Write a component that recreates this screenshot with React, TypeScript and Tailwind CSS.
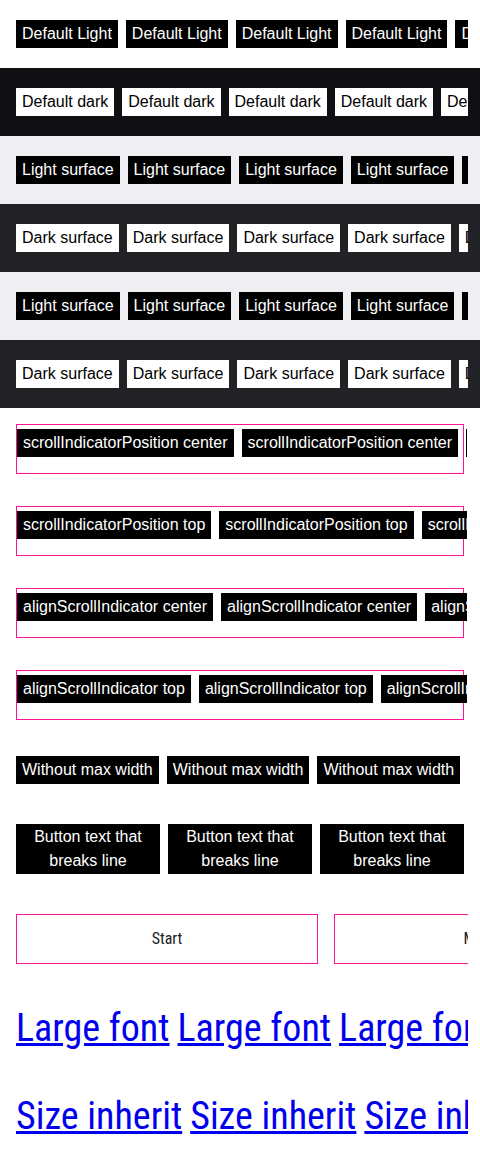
type Tone = "light" | "dark"

// scroll viewport reaching 4px past the content box, like the reference
function Scroller({ children }: { children: React.ReactNode }) {
  return <div className="-mx-1 px-1 overflow-hidden flex gap-2">{children}</div>
}

function Chip({ label, tone }: { label: string; tone: Tone }) {
  return (
    <span
      className={`shrink-0 h-7 px-1.5 flex items-center whitespace-nowrap text-[16px] font-['Liberation_Sans',Arial,sans-serif] ${
        tone === "light" ? "bg-black text-white" : "bg-white text-black"
      }`}
    >
      {label}
    </span>
  )
}

function Row({ label, tone, bg }: { label: string; tone: Tone; bg: string }) {
  return (
    <section className={`px-4 py-5 ${bg}`}>
      <Scroller>
        {[0, 1, 2, 3, 4, 5].map((i) => (
          <Chip key={i} label={label} tone={tone} />
        ))}
      </Scroller>
    </section>
  )
}

function Boxed({ label }: { label: string }) {
  return (
    <section className="px-4 py-4">
      <div className="border border-[#ff1493] pt-1 pb-4">
        <Scroller>
          {[0, 1, 2, 3].map((i) => (
            <Chip key={i} label={label} tone="light" />
          ))}
        </Scroller>
      </div>
    </section>
  )
}

export default function App() {
  const roboto = "font-['Roboto',sans-serif] [font-stretch:condensed]"
  return (
    <div className="bg-white min-h-[1160px]">
      <Row label="Default Light" tone="light" bg="bg-white" />
      <Row label="Default dark" tone="dark" bg="bg-[#101014]" />
      <Row label="Light surface" tone="light" bg="bg-[#eeeff3]" />
      <Row label="Dark surface" tone="dark" bg="bg-[#212226]" />
      <Row label="Light surface" tone="light" bg="bg-[#eeeff3]" />
      <Row label="Dark surface" tone="dark" bg="bg-[#212226]" />

      <Boxed label="scrollIndicatorPosition center" />
      <Boxed label="scrollIndicatorPosition top" />
      <Boxed label="alignScrollIndicator center" />
      <Boxed label="alignScrollIndicator top" />

      {/* Without max width */}
      <section className="px-4 py-5">
        <Scroller>
          {[0, 1, 2, 3].map((i) => (
            <Chip key={i} label="Without max width" tone="light" />
          ))}
        </Scroller>
      </section>

      {/* Wrapping buttons */}
      <section className="px-4 py-5">
        <Scroller>
          {[0, 1, 2, 3].map((i) => (
            <span
              key={i}
              className="shrink-0 w-36 px-1.5 py-px text-center leading-6 text-[16px] bg-black text-white font-['Liberation_Sans',Arial,sans-serif]"
            >
              Button text that breaks line
            </span>
          ))}
        </Scroller>
      </section>

      {/* Start / Middle / End */}
      <section className="px-4 py-5">
        <Scroller>
          <div className="flex gap-4">
            {["Start", "Middle", "End"].map((t) => (
              <div
                key={t}
                className={`shrink-0 w-[302px] h-[50px] border border-[#ff1493] flex items-center justify-center text-[16px] text-[#222] ${roboto}`}
              >
                {t}
              </div>
            ))}
          </div>
        </Scroller>
      </section>

      <section className="px-4 py-5">
        <Scroller>
          {[0, 1, 2, 3].map((i) => (
            <a key={i} href="#" className={`shrink-0 whitespace-nowrap text-[38px] leading-12 text-[#0000ee] underline ${roboto}`}>
              Large font
            </a>
          ))}
        </Scroller>
      </section>

      <section className="px-4 py-5">
        <Scroller>
          {[0, 1, 2, 3].map((i) => (
            <a key={i} href="#" className={`shrink-0 whitespace-nowrap text-[38px] leading-12 text-[#0000ee] underline ${roboto}`}>
              Size inherit
            </a>
          ))}
        </Scroller>
      </section>
    </div>
  )
}
